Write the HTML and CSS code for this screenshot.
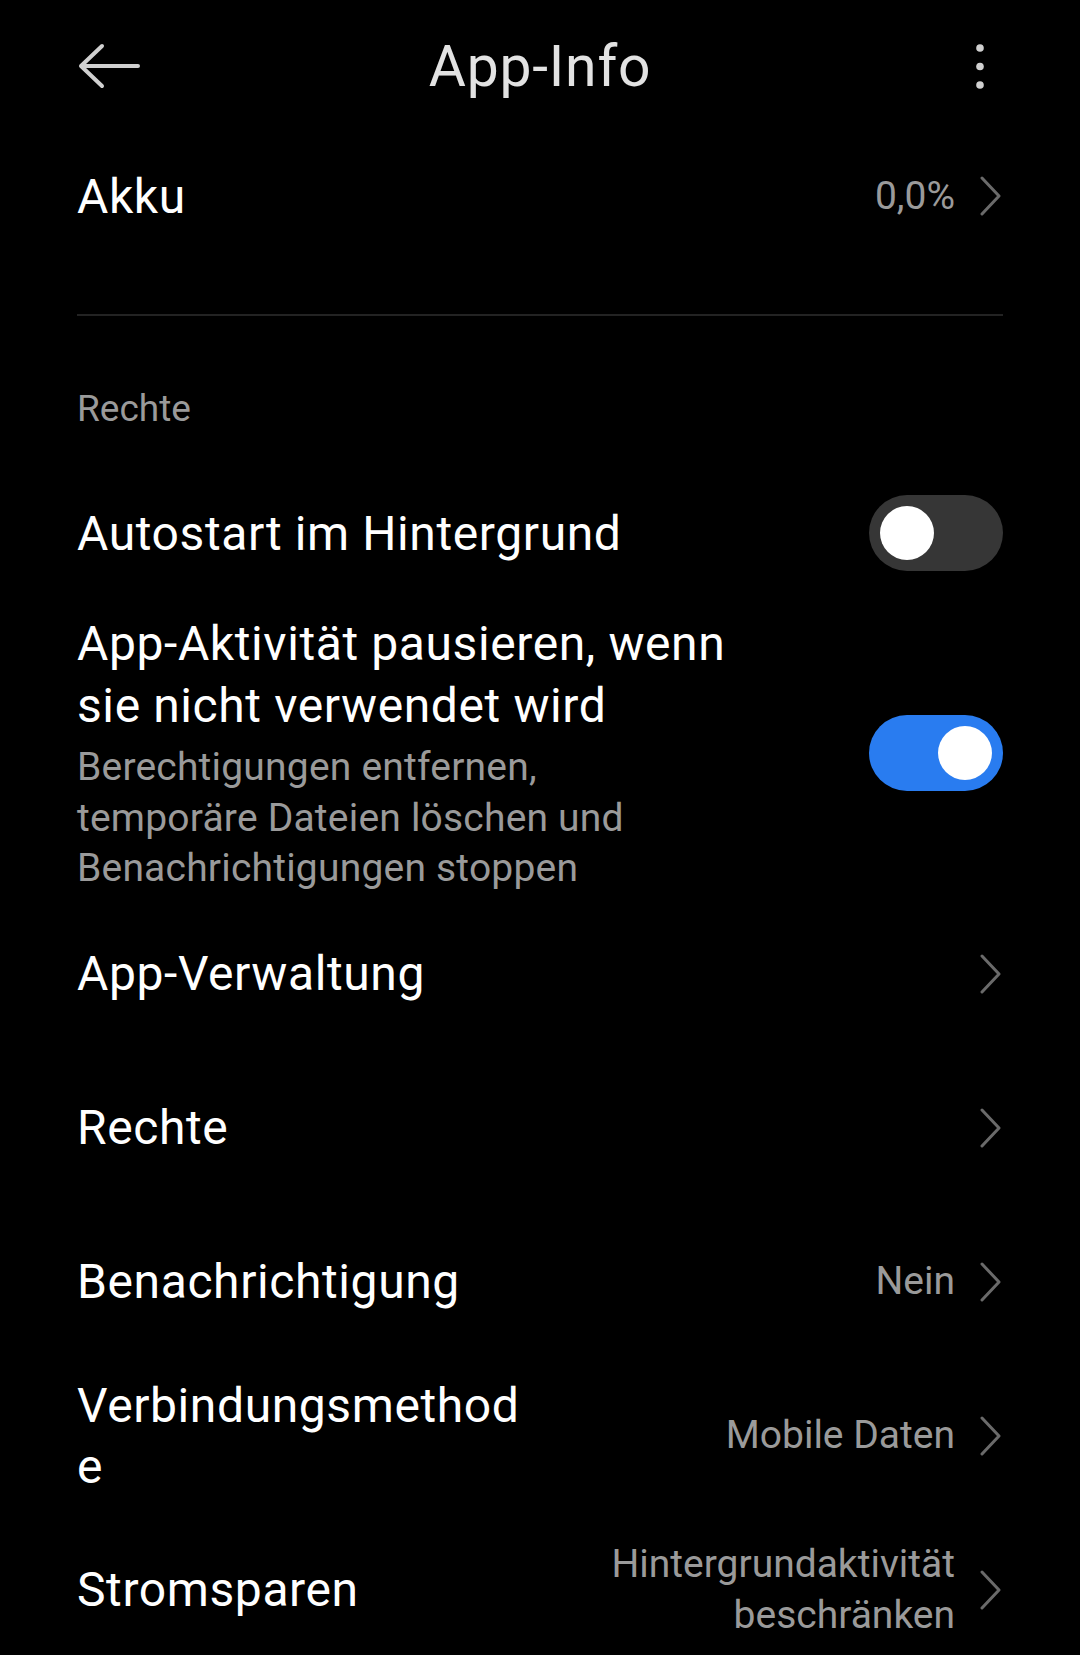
FILE: index.html
```html
<!DOCTYPE html>
<html lang="de">
<head>
<meta charset="utf-8">
<title>App-Info</title>
<link rel="stylesheet" href="styles.css">
</head>
<body>
<div class="screen">
  <header class="topbar">
    <svg class="back" width="64" height="48" viewBox="0 0 64 48" aria-hidden="true">
      <path d="M4 24 H61 M25 4 L4 24 L25 44" fill="none" stroke="#d0d0d0" stroke-width="4" stroke-linecap="round" stroke-linejoin="round"/>
    </svg>
    <h1 class="title">App-Info</h1>
    <svg class="more" width="24" height="48" viewBox="0 0 24 48" aria-hidden="true">
      <circle cx="12" cy="6" r="3.8" fill="#d0d0d0"/>
      <circle cx="12" cy="24.5" r="3.8" fill="#d0d0d0"/>
      <circle cx="12" cy="43" r="3.8" fill="#d0d0d0"/>
    </svg>
  </header>

  <div class="item first">
    <span class="label">Akku</span>
    <div class="trail">
      <span class="value">0,0%</span>
      <svg class="chev" width="24" height="40" viewBox="0 0 24 40" aria-hidden="true"><path d="M3 2 L20 20 L3 38" fill="none" stroke="#6a6a6a" stroke-width="3" stroke-linecap="round" stroke-linejoin="round"/></svg>
    </div>
  </div>

  <div class="divider"></div>

  <div class="section">Rechte</div>

  <div class="item">
    <span class="label">Autostart im Hintergrund</span>
    <div class="trail"><span class="switch"><span class="knob"></span></span></div>
  </div>

  <div class="item multi">
    <div class="text">
      <div class="label">App-Aktivität pausieren, wenn<br>sie nicht verwendet wird</div>
      <div class="sub">Berechtigungen entfernen,<br>temporäre Dateien löschen und<br>Benachrichtigungen stoppen</div>
    </div>
    <div class="trail"><span class="switch on"><span class="knob"></span></span></div>
  </div>

  <div class="item nav">
    <span class="label">App-Verwaltung</span>
    <div class="trail">
      <svg class="chev" width="24" height="40" viewBox="0 0 24 40" aria-hidden="true"><path d="M3 2 L20 20 L3 38" fill="none" stroke="#6a6a6a" stroke-width="3" stroke-linecap="round" stroke-linejoin="round"/></svg>
    </div>
  </div>

  <div class="item nav">
    <span class="label">Rechte</span>
    <div class="trail">
      <svg class="chev" width="24" height="40" viewBox="0 0 24 40" aria-hidden="true"><path d="M3 2 L20 20 L3 38" fill="none" stroke="#6a6a6a" stroke-width="3" stroke-linecap="round" stroke-linejoin="round"/></svg>
    </div>
  </div>

  <div class="item nav">
    <span class="label">Benachrichtigung</span>
    <div class="trail">
      <span class="value">Nein</span>
      <svg class="chev" width="24" height="40" viewBox="0 0 24 40" aria-hidden="true"><path d="M3 2 L20 20 L3 38" fill="none" stroke="#6a6a6a" stroke-width="3" stroke-linecap="round" stroke-linejoin="round"/></svg>
    </div>
  </div>

  <div class="item nav">
    <span class="label">Verbindungsmethode</span>
    <div class="trail">
      <span class="value">Mobile Daten</span>
      <svg class="chev" width="24" height="40" viewBox="0 0 24 40" aria-hidden="true"><path d="M3 2 L20 20 L3 38" fill="none" stroke="#6a6a6a" stroke-width="3" stroke-linecap="round" stroke-linejoin="round"/></svg>
    </div>
  </div>

  <div class="item nav">
    <span class="label">Stromsparen</span>
    <div class="trail">
      <span class="value">Hintergrundaktivität beschränken</span>
      <svg class="chev" width="24" height="40" viewBox="0 0 24 40" aria-hidden="true"><path d="M3 2 L20 20 L3 38" fill="none" stroke="#6a6a6a" stroke-width="3" stroke-linecap="round" stroke-linejoin="round"/></svg>
    </div>
  </div>
</div>
</body>
</html>
```

FILE: styles.css
```css
html, body {
  margin: 0;
  padding: 0;
  background: #000;
}

body {
  font-family: Roboto, "Noto Sans", "Liberation Sans", sans-serif;
  color: #fff;
  overflow: hidden;
}

.screen {
  height: 1655px;
  overflow: hidden;
  padding: 0 77px;
  box-sizing: border-box;
}

.topbar {
  height: 132px;
  display: grid;
  grid-template-columns: 1fr auto 1fr;
  align-items: center;
}

.back {
  justify-self: start;
  display: block;
}

.more {
  justify-self: end;
  margin-right: 11px;
  display: block;
}

.title {
  margin: 0;
  font-size: 57px;
  line-height: 1;
  font-weight: 400;
  color: #e2e2e2;
  letter-spacing: 0.8px;
}

.item {
  display: flex;
  align-items: center;
  min-height: 154px;
  padding: 16px 0;
  box-sizing: border-box;
}

.item.first {
  min-height: 128px;
  padding: 0;
}

.label {
  font-size: 48px;
  line-height: 61px;
  color: #fff;
  letter-spacing: 0.6px;
}

.item.nav .label {
  max-width: 455px;
  word-break: break-all;
}

.trail {
  margin-left: auto;
  display: flex;
  align-items: center;
  gap: 24px;
  flex: none;
}

.value {
  font-size: 39px;
  line-height: 51px;
  color: #9a9a9a;
  text-align: right;
  max-width: 380px;
}

.chev {
  display: block;
  flex: none;
}

.divider {
  margin-top: 54px;
  height: 2px;
  background: #232323;
}

.section {
  padding: 74px 0 29px;
  font-size: 37px;
  line-height: 37px;
  color: #9a9a9a;
}

.item.multi {
  padding: 3px 0;
}

.item.multi .label {
  line-height: 62px;
}

.sub {
  margin-top: 5px;
  font-size: 39px;
  line-height: 50.5px;
  color: #9a9a9a;
  letter-spacing: 0.2px;
}

.switch {
  width: 134px;
  height: 76px;
  border-radius: 38px;
  background: #363636;
  display: flex;
  align-items: center;
  justify-content: flex-start;
  padding: 0 11px;
  box-sizing: border-box;
}

.switch.on {
  background: #297cf0;
  justify-content: flex-end;
}

.knob {
  width: 54px;
  height: 54px;
  border-radius: 50%;
  background: #fff;
}
```
